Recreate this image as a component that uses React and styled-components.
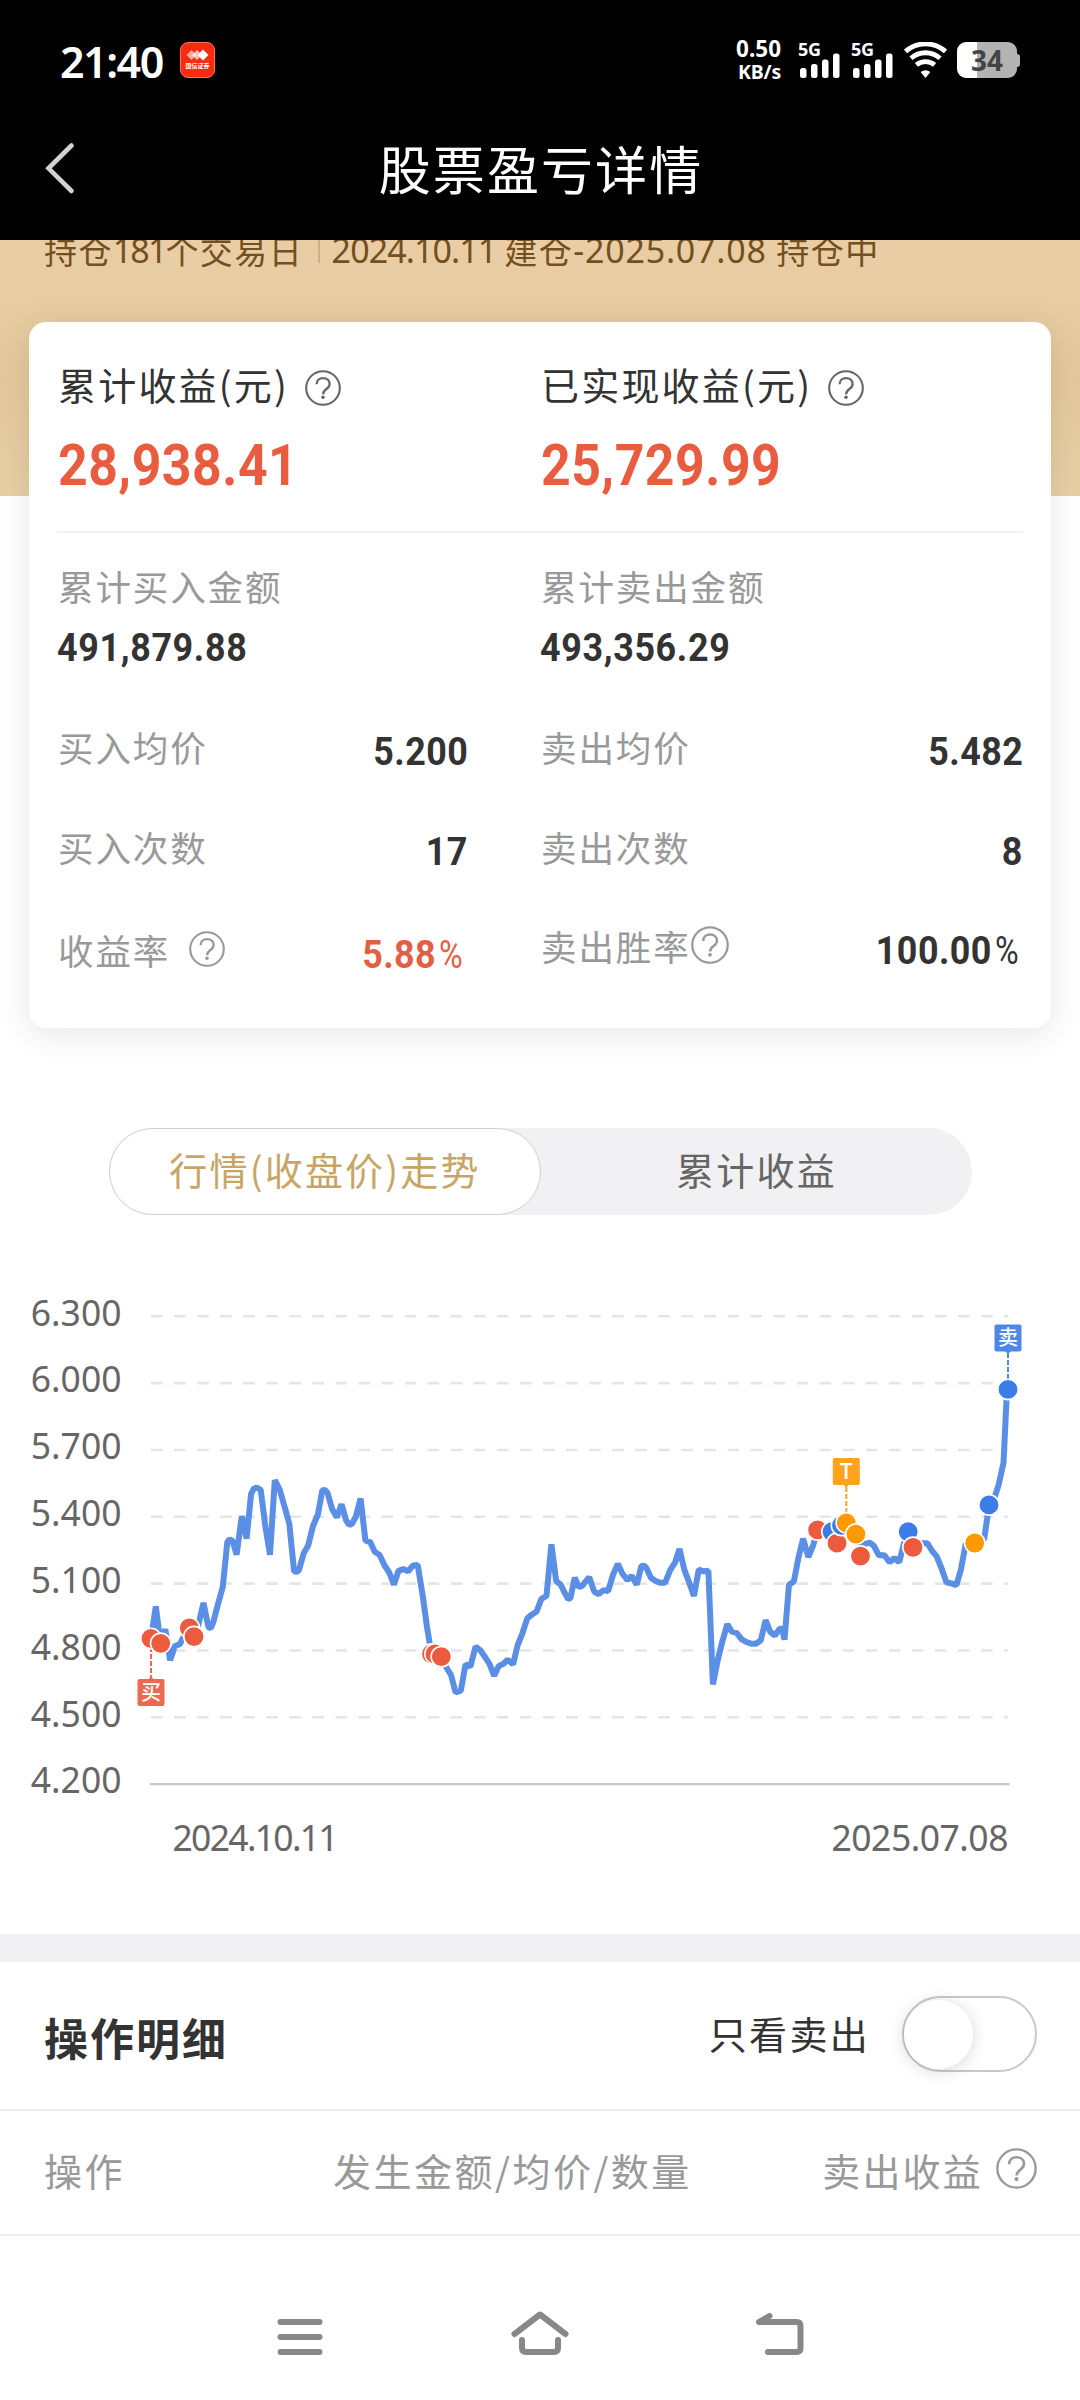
import React from "react";
import styled, { createGlobalStyle, css } from "styled-components";

const CJK = '"Noto Sans CJK SC", sans-serif';
const DIGITS = 'Roboto, "Noto Sans CJK SC", sans-serif';
const AXIS = '"Noto Sans", "Noto Sans CJK SC", sans-serif';

const GlobalStyle = createGlobalStyle`
  * { box-sizing: border-box; }
  html, body { margin: 0; padding: 0; background: #fdfdfe; }
  body { font-family: ${CJK}; color: #333; }
  svg { display: block; flex: none; }
`;

const Screen = styled.div`
  width: 1080px;
  height: 2400px;
  overflow: hidden;
  display: flex;
  flex-direction: column;
  background: #fff;
  white-space: nowrap;
`;

/* ---------- status bar ---------- */
const StatusBar = styled.div`
  height: 120px;
  flex: none;
  background: #000;
  color: #fff;
  display: flex;
  align-items: center;
  padding: 0 60px 0 60px;
`;
const Clock = styled.div`
  width: 120px;
  font: 600 43px/50px "Noto Sans", sans-serif;
  letter-spacing: -1.5px;
  padding-top: 3px;
`;
const AppBadge = styled.div`
  width: 35px;
  height: 36px;
  border-radius: 8px;
  background: #f62b10;
  border: 1px solid #f9705c;
  display: flex;
  flex-direction: column;
  align-items: center;
  padding-top: 6px;
`;
const AppBadgeText = styled.div`
  width: 25px;
  height: 8px;
  display: flex;
  justify-content: center;
  font: 700 6px/8px ${CJK};
  margin-top: 1px;
`;
const StatusRight = styled.div`
  margin-left: auto;
  display: flex;
  align-items: center;
`;
const Speed = styled.div`
  display: flex;
  flex-direction: column;
  align-items: flex-end;
  margin-right: 17px;
`;
const SpeedValue = styled.span`
  font: 700 22.5px/20px "Noto Sans", sans-serif;
`;
const SpeedUnit = styled.span`
  margin-top: 3px;
  font: 700 19.5px/20px "Noto Sans", sans-serif;
  letter-spacing: -0.2px;
`;
const Signal = styled.div`
  width: 43px;
  height: 36px;
  margin-right: 10px;
  display: flex;
  flex-direction: column;
`;
const SignalLabel = styled.div`
  font: 700 18px/14px "Noto Sans", sans-serif;
  letter-spacing: -0.4px;
  height: 11px;
`;
const Battery = styled.div`
  width: 60px;
  height: 36px;
  margin-left: 10px;
  border-radius: 9px;
  background: linear-gradient(90deg, #fff 20px, #b3b3b3 20px);
  color: #444;
  font: 700 28px/36px "Noto Sans", sans-serif;
  text-align: center;
`;
const BatteryNub = styled.div`
  width: 3px;
  height: 13px;
  border-radius: 0 3px 3px 0;
  background: #b3b3b3;
`;

/* ---------- title bar ---------- */
const TitleBar = styled.header`
  height: 120px;
  flex: none;
  background: #000;
  color: #fff;
  display: grid;
  grid-template-columns: 202px 1fr 200px;
  align-items: start;
  padding-top: 10px;
`;
const BackButton = styled.div`
  height: 76px;
  padding: 10px 0 0 43px;
`;
const Title = styled.h1`
  margin: 0;
  font: 400 52px/76px ${CJK};
  letter-spacing: 2.1px;
  text-align: center;
`;

/* ---------- hero ---------- */
const Hero = styled.div`
  height: 256px;
  flex: none;
  overflow: hidden;
  background: linear-gradient(180deg, #eacda4 0, #e6cba0 90px, #e4c89d 140px, #e7cfa5 256px);
`;
const HoldingLine = styled.div`
  display: flex;
  align-items: center;
  margin-top: -10px;
  padding-left: 44px;
  height: 40px;
  font: 400 33px/40px ${CJK};
  color: #72501f;
`;
const HoldingCjk = styled.span`
  font-family: ${CJK};
  letter-spacing: 1.4px;
`;
const HoldingNumber = styled.span`
  font-family: "Noto Sans", sans-serif;
  font-size: 34px;
  letter-spacing: ${(p) => p.$track ?? 0}px;
`;
const HoldingSeparator = styled.i`
  width: 1.5px;
  height: 26px;
  background: #cdb083;
  margin: 0 12px 0 15px;
`;

/* ---------- summary card ---------- */
const Card = styled.section`
  position: relative;
  flex: none;
  width: 1022px;
  height: 706px;
  margin: -174px 0 0 29px;
  padding: 36px 28px 0;
  border-radius: 17px;
  background: #fff;
  box-shadow: 0 6px 34px rgba(0, 0, 0, 0.1);
`;
const Columns = styled.div`
  display: grid;
  grid-template-columns: 411px 483px;
  column-gap: 72px;
`;
const Column = styled.div`
  display: flex;
  flex-direction: column;
  align-items: stretch;
`;
const Label = styled.div`
  display: flex;
  align-items: center;
  gap: ${(p) => p.$gap ?? 0}px;
  height: 50px;
  padding-left: 1px;
  font: 400 35.5px/50px ${CJK};
  letter-spacing: 1.9px;
  color: #999;
`;
const HeadLabel = styled(Label)`
  height: 51px;
  font-size: 38px;
  line-height: 51px;
  letter-spacing: 2.2px;
  color: #333;
  svg { margin-top: 9px; }
`;
const RowLabel = styled(Label)`
  height: 52px;
  padding-top: 2px;
  svg { margin-top: -2px; }
`;
const digits = css`
  display: inline-block;
  font-family: ${DIGITS};
  font-weight: 700;
  letter-spacing: 0.6px;
  transform-origin: ${(p) => (p.$right ? "right" : "left")} center;
  transform: scaleX(0.92);
`;
const BigValue = styled.div`
  ${digits}
  height: 112px;
  font-size: 57.5px;
  line-height: 114px;
  padding-left: 1px;
  color: #ea5c40;
  transform: scaleX(0.9);
`;
const Amount = styled.div`
  ${digits}
  font-size: 39px;
  line-height: 75px;
  letter-spacing: 0.7px;
  color: #333;
`;
const RowValue = styled.div`
  ${digits}
  font-size: 39px;
  line-height: 50px;
  padding-top: 12px;
  letter-spacing: 0.5px;
  color: ${(p) => (p.$hot ? "#e25f45" : "#333")};
`;
const Percent = styled.span`
  font-weight: 400;
  font-size: 39px;
  margin: 0 3px 0 2px;
  display: inline-block;
  transform: scaleX(0.9);
`;
const Divider = styled.div`
  height: 2px;
  margin: 10px 0 28px;
  background: #f1f1f1;
`;
const Row = styled.div`
  display: flex;
  justify-content: space-between;
  align-items: center;
  height: ${(p) => p.$h ?? 100}px;
`;
const Rows = styled.div`
  padding-top: 10px;
`;

/* ---------- tabs ---------- */
const Tabs = styled.div`
  flex: none;
  width: 863px;
  height: 87px;
  margin: 100px 0 0 109px;
  border-radius: 44px;
  background: #f1f1f3;
  display: grid;
  grid-template-columns: 432px 431px;
`;
const Tab = styled.div`
  border-radius: 44px;
  border: 1.5px solid ${(p) => (p.$active ? "#d0d0d0" : "transparent")};
  background: ${(p) => (p.$active ? "#fff" : "transparent")};
  color: ${(p) => (p.$active ? "#c8a565" : "#666")};
  font: 400 38px/80px ${CJK};
  letter-spacing: 2.2px;
  text-align: center;
`;

const ChartArea = styled.div`
  flex: none;
  height: 620px;
  margin-top: 55px;
`;

/* ---------- details ---------- */
const Band = styled.div`
  flex: none;
  height: 28px;
  margin-top: 44px;
  background: #f1f1f4;
`;
const DetailHead = styled.div`
  flex: none;
  height: 149px;
  border-bottom: 2px solid #ececec;
  display: flex;
  align-items: center;
  padding: 0 43px 0 44px;
`;
const DetailTitle = styled.h2`
  margin: 0 auto 0 0;
  font: 700 44px/60px ${CJK};
  letter-spacing: 2px;
  padding-top: 2px;
`;
const ToggleLabel = styled.span`
  font: 400 38px/50px ${CJK};
  letter-spacing: 2.3px;
  margin: -5px 32px 0 0;
`;
const Toggle = styled.div`
  width: 135px;
  height: 76px;
  border: 2.5px solid #c9c9c9;
  border-radius: 38px;
  background: #fff;
  display: flex;
  align-items: center;
  margin-top: -3px;
`;
const Knob = styled.div`
  width: 69px;
  height: 69px;
  border-radius: 50%;
  background: #fff;
  box-shadow: 0 2px 16px rgba(30, 50, 70, 0.19);
`;
const TableHead = styled.div`
  flex: none;
  height: 125px;
  border-bottom: 2px solid #f0f0f0;
  display: grid;
  grid-template-columns: 289px 1fr auto;
  align-items: center;
  padding: 0 43px 5px 44px;
  font: 400 38px/50px ${CJK};
  letter-spacing: 2.5px;
  color: #999;
`;
const ProfitCell = styled.div`
  display: flex;
  align-items: center;
  gap: 13px;
  letter-spacing: 2.2px;
  svg { margin-top: -3px; }
`;
const NavBar = styled.nav`
  flex: none;
  height: 164px;
  padding: 71px 180px 0;
  display: grid;
  grid-template-columns: repeat(3, 240px);
  justify-items: center;
  align-items: start;
`;

/* ---------- icons ---------- */
function Help({ size = 36, color = "#999" }) {
  return (
    <svg width={size} height={size} viewBox="0 0 36 36" fill="none" stroke={color}>
      <circle cx="18" cy="18" r="16.8" strokeWidth="2.1" />
      <path d="M11.6 14.2C11.6 10.4 14.3 8.1 18 8.1s6.6 2.3 6.6 5.8c0 2.4-1.4 3.8-3.2 5.1-2 1.5-3.3 2.5-3.3 5.2" strokeWidth="2.3" />
      <circle cx="18" cy="27.3" r="1.8" fill={color} stroke="none" />
    </svg>
  );
}

function SignalBars() {
  return (
    <svg width="42" height="25" viewBox="0 0 42 25" fill="#fff">
      <rect x="2" y="15" width="6.5" height="10" rx="2.5" />
      <rect x="13" y="11" width="6.5" height="14" rx="2.5" />
      <rect x="24" y="6.5" width="6.5" height="18.5" rx="2.5" />
      <rect x="35" y="0.5" width="6.5" height="24.5" rx="2.5" />
    </svg>
  );
}

function Wifi() {
  return (
    <svg width="43" height="36" viewBox="0 0 43 36" fill="none" stroke="#fff" strokeWidth="4.8">
      <path d="M1.5 9.5A30 30 0 0 1 41.5 9.5" />
      <path d="M7 16.2A22 22 0 0 1 36 16.2" />
      <path d="M12.4 22.8A14.5 14.5 0 0 1 30.6 22.8" />
      <path d="M16.6 30Q21.5 26.6 26.4 30L21.5 36Z" fill="#fff" stroke="none" />
    </svg>
  );
}

/* ---------- chart data ---------- */
const LEFT_X = 151;
const Y0 = 46.3;
const GAP = 66.83;
const UNIT_X = 1 / 2.9037;
const UNIT_Y = 1.148;
const gridLabels = ["6.300", "6.000", "5.700", "5.400", "5.100", "4.800", "4.500", "4.200"];

const series = [
  [438.6, 321], [452.4, 293], [466, 325], [480, 313], [494, 340], [508, 327.5], [522, 326], [535, 318.5], [549, 312.5], [563, 319],
  [577, 308], [591, 290], [605, 311], [612, 312], [619, 307], [633, 291], [647, 276], [660, 237], [667, 234.5], [675, 236], [687, 248],
  [702, 214.5], [716, 234], [729, 195], [737, 190.5], [745, 189.5], [757, 191.5], [771, 224], [784, 248], [798, 183], [812, 191],
  [826, 206], [840, 221], [854, 262.5], [862, 263], [868, 261.5], [882, 246.5], [895, 240], [909, 223], [923, 213], [936, 192],
  [943, 191.5], [951, 194], [964, 208], [978, 215.5], [992, 204], [1005, 218], [1014, 222], [1022, 221], [1033, 215], [1047, 199],
  [1061, 235.5], [1075, 237], [1088, 245.5], [1102, 248], [1116, 257], [1130, 263.5], [1144, 274], [1157, 262], [1171, 260.5],
  [1185, 262.5], [1199, 257.5], [1213, 257], [1227, 283], [1240, 311], [1253, 335], [1282, 337], [1296, 346], [1310, 353],
  [1323, 368], [1338, 366.5], [1352, 343.5], [1366, 345.5], [1381, 328], [1394, 331], [1408, 337], [1421, 343], [1435, 353.5],
  [1448, 345], [1462, 343], [1474, 339.5], [1490, 343.5], [1503, 327], [1517, 316.5], [1531, 303.5], [1545, 300], [1558, 297.5],
  [1572, 286.5], [1587, 284], [1601, 239], [1615, 271], [1628, 274], [1642, 282.5], [1650, 286.5], [1656, 286], [1669, 268],
  [1680, 276], [1689, 275.5], [1711, 267.5], [1725, 280], [1738, 282.5], [1752, 279], [1766, 279.5], [1780, 265.5],
  [1794, 256], [1808, 265], [1822, 270], [1834, 266.5], [1849, 274], [1862, 258], [1869, 257.5], [1877, 259.5], [1890, 268],
  [1904, 271], [1918, 272.5], [1931, 272.5], [1946, 261.5], [1960, 255], [1973, 243], [1987, 261], [2001, 272], [2015, 284],
  [2029, 261], [2043, 262.5], [2057, 262], [2070, 361], [2084, 340], [2098, 323], [2112, 308.5], [2125, 315], [2139, 316],
  [2153, 321.5], [2167, 324], [2181, 325.5], [2195, 325.5], [2209, 322.5], [2223, 305], [2236, 315], [2250, 318.5],
  [2264, 312.5], [2271, 312.5], [2278, 322], [2291, 274], [2305, 271.5], [2319, 250], [2332, 234], [2347, 250], [2361, 240],
  [2374, 226.5], [2388, 232], [2402, 228], [2416, 228], [2430, 238], [2443, 222.5], [2457, 220.5], [2471, 228], [2485, 230],
  [2499, 240], [2513, 238.5], [2526, 237.5], [2538, 240.5], [2552, 248.5], [2568, 248.5], [2583, 254.5], [2597, 251],
  [2611, 254.5], [2625, 238], [2638, 228], [2652, 241.5], [2666, 238], [2693, 238], [2707, 245], [2720, 249.5], [2734, 260],
  [2748, 272], [2762, 273], [2777, 274.5], [2790, 261.5], [2804, 238.5], [2830, 238], [2846, 238], [2858, 234], [2872, 204.6],
  [2886, 200], [2900, 187], [2914, 168], [2924, 104],
];

const RED = "#ed5b3f";
const BLUE = "#3b7ce8";
const ORANGE = "#ff9900";
const trades = [
  [151, 321, RED], [160.7, 325.2, RED], [189.3, 311.8, RED], [194, 319.3, RED],
  [431.5, 334.5, RED], [435, 334.5, RED], [441.3, 336.8, RED],
  [817.6, 226.4, RED], [832, 228, BLUE], [837, 238, RED], [841.5, 222.5, BLUE], [846.3, 220.2, ORANGE],
  [855.9, 230, ORANGE], [860.5, 249.2, RED], [908.2, 228, BLUE], [913, 241.6, RED],
  [974.7, 237.8, ORANGE], [989, 204.6, BLUE], [1008, 104, BLUE],
];

function Flag({ x, y, text, color, from, to, down }) {
  return (
    <g>
      <line x1={x} x2={x} y1={from} y2={to} stroke={color} strokeWidth="2" strokeDasharray="5 2" />
      <rect x={x - 13.5} y={y} width="27" height="27" rx="2" fill={color} />
      <path d={down ? `M${x - 3} ${y + 26.5}h6l-3 3z` : `M${x - 3} ${y + 0.5}h6l-3 -3z`} fill={color} />
      <text x={x} y={y + 20.5} textAnchor="middle" fontFamily={CJK} fontSize={text === "T" ? 22 : 20} fontWeight="500" fill="#fff">{text}</text>
    </g>
  );
}

function PriceChart() {
  const points = series.map(([x, y]) => `${(x * UNIT_X).toFixed(1)},${(y * UNIT_Y).toFixed(1)}`).join(" ");
  return (
    <svg width="1080" height="620" viewBox="0 0 1080 620">
      {gridLabels.map((label, i) => {
        const y = Y0 + i * GAP;
        const last = i === gridLabels.length - 1;
        return (
          <g key={label}>
            <line
              x1={last ? 150 : LEFT_X}
              x2={last ? 1009.5 : 1008}
              y1={y}
              y2={y}
              stroke={last ? "#c8c8c8" : "#e5e5e5"}
              strokeWidth={last ? 2.4 : 2.6}
              strokeDasharray={last ? undefined : "11.53 11.53"}
            />
            <text x="121.5" y={y + 9.3} textAnchor="end" fontFamily={AXIS} fontSize="35.5" fill="#666">{label}</text>
          </g>
        );
      })}
      <polyline points={points} fill="none" stroke="#5b8fe6" strokeWidth="6" strokeLinejoin="bevel" />
      <Flag x={151} y={409} text="买" color="#eb6a50" from={377} to={409} />
      <Flag x={846.3} y={188} text="T" color="#ffa31c" from={217} to={243} down />
      <Flag x={1008} y={54.5} text="卖" color="#4f88e4" from={83} to={110} down />
      {trades.map(([x, y, color], i) => (
        <circle key={i} cx={x} cy={y * UNIT_Y} r="10.2" fill={color} stroke="#fff" strokeWidth="1.6" />
      ))}
      <text x="172.5" y="581" fontFamily={AXIS} fontSize="35.5" letterSpacing="-1.7" fill="#666">2024.10.11</text>
      <text x="831.5" y="581" fontFamily={AXIS} fontSize="35.5" letterSpacing="-0.5" fill="#666">2025.07.08</text>
    </svg>
  );
}

export default function App() {
  return (
    <Screen>
      <GlobalStyle />
      <StatusBar>
        <Clock>21:40</Clock>
        <AppBadge>
          <svg width="25" height="12" viewBox="0 0 25 12" fill="#fff">
            <path d="M6.5 1l5 5-5 5-5-5z" opacity=".6" />
            <path d="M12 1l5 5-5 5-5-5z" opacity=".7" />
            <path d="M18 .5l5.500 5.500-5.500 5.500L12.500 6z" />
          </svg>
          <AppBadgeText>国信证券</AppBadgeText>
        </AppBadge>
        <StatusRight>
          <Speed>
            <SpeedValue>0.50</SpeedValue>
            <SpeedUnit>KB/s</SpeedUnit>
          </Speed>
          <Signal>
            <SignalLabel>5G</SignalLabel>
            <SignalBars />
          </Signal>
          <Signal>
            <SignalLabel>5G</SignalLabel>
            <SignalBars />
          </Signal>
          <Wifi />
          <Battery>34</Battery>
          <BatteryNub />
        </StatusRight>
      </StatusBar>

      <TitleBar>
        <BackButton>
          <svg width="34" height="56" viewBox="0 0 34 56" fill="none" stroke="#d2d2d2" strokeWidth="4.6" strokeLinecap="round">
            <path d="M28.5 5.5L5.5 28.3L28.5 51" />
          </svg>
        </BackButton>
        <Title>股票盈亏详情</Title>
      </TitleBar>

      <Hero>
        <HoldingLine>
          <HoldingCjk>持仓</HoldingCjk>
          <HoldingNumber $track={-1.9}>181</HoldingNumber>
          <HoldingCjk>个交易日</HoldingCjk>
          <HoldingSeparator />
          <HoldingNumber $track={-0.9}>2024.10.11&nbsp;</HoldingNumber>
          <HoldingCjk>建仓</HoldingCjk>
          <HoldingNumber $track={0.8}>-2025.07.08&nbsp;</HoldingNumber>
          <HoldingCjk>持仓中</HoldingCjk>
        </HoldingLine>
      </Hero>

      <Card>
        <Columns>
          <Column>
            <HeadLabel $gap={16}>累计收益(元)<Help color="#666" /></HeadLabel>
            <BigValue>28,938.41</BigValue>
          </Column>
          <Column>
            <HeadLabel $gap={16}>已实现收益(元)<Help color="#666" /></HeadLabel>
            <BigValue>25,729.99</BigValue>
          </Column>
        </Columns>
        <Divider />
        <Columns>
          <Column>
            <Label>累计买入金额</Label>
            <Amount>491,879.88</Amount>
            <Rows>
              <Row><RowLabel>买入均价</RowLabel><RowValue $right>5.200</RowValue></Row>
              <Row><RowLabel>买入次数</RowLabel><RowValue $right>17</RowValue></Row>
              <Row $h={106}>
                <RowLabel $gap={19}>收益率<Help /></RowLabel>
                <RowValue $right $hot>5.88<Percent>%</Percent></RowValue>
              </Row>
            </Rows>
          </Column>
          <Column>
            <Label>累计卖出金额</Label>
            <Amount>493,356.29</Amount>
            <Rows>
              <Row><RowLabel>卖出均价</RowLabel><RowValue $right>5.482</RowValue></Row>
              <Row><RowLabel>卖出次数</RowLabel><RowValue $right>8</RowValue></Row>
              <Row $h={98}>
                <RowLabel>卖出胜率<Help size={38} /></RowLabel>
                <RowValue $right>100.00<Percent>%</Percent></RowValue>
              </Row>
            </Rows>
          </Column>
        </Columns>
      </Card>

      <Tabs>
        <Tab $active>行情(收盘价)走势</Tab>
        <Tab>累计收益</Tab>
      </Tabs>

      <ChartArea>
        <PriceChart />
      </ChartArea>

      <Band />
      <DetailHead>
        <DetailTitle>操作明细</DetailTitle>
        <ToggleLabel>只看卖出</ToggleLabel>
        <Toggle><Knob /></Toggle>
      </DetailHead>
      <TableHead>
        <span>操作</span>
        <span>发生金额/均价/数量</span>
        <ProfitCell>卖出收益<Help size={41} /></ProfitCell>
      </TableHead>

      <NavBar>
        <svg width="60" height="56" viewBox="0 0 60 56" fill="none" stroke="#888" strokeWidth="6" strokeLinecap="round">
          <path d="M10.500 15h39M10.500 30h39M10.500 45h39" />
        </svg>
        <svg width="60" height="56" viewBox="0 0 60 56" fill="none" stroke="#888" strokeWidth="6" strokeLinecap="round" strokeLinejoin="round">
          <path d="M4.500 27L30 7.500L55.500 27" />
          <path d="M12 33v8q0 4 4 4h28q4 0 4-4v-8" />
        </svg>
        <svg width="60" height="56" viewBox="0 0 60 56" fill="none" stroke="#888" strokeWidth="6" strokeLinecap="round" strokeLinejoin="round">
          <path d="M19.500 9L9 15H46.500q4 0 4 4V41q0 4-4 4H18" />
        </svg>
      </NavBar>
    </Screen>
  );
}
